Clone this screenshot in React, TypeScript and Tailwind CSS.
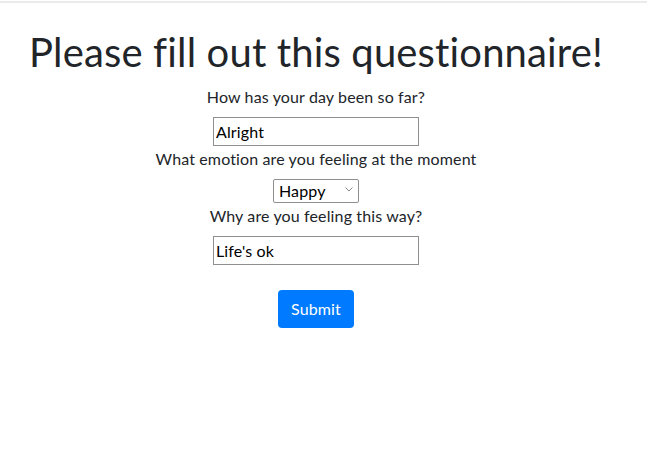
import { useState } from 'react'

export default function App() {
  const [day, setDay] = useState('Alright')
  const [emotion, setEmotion] = useState('Happy')
  const [why, setWhy] = useState("Life's ok")

  return (
    <div className="min-h-[467px] bg-white text-[#212529] font-['Segoe_UI',Lato,'Noto_Sans',sans-serif] [font-variant-ligatures:none]">
      {/* thin bar at the very top */}
      <div className="mt-px h-[2px] bg-[#ebebeb]" />

      <div className="w-[632px] flex flex-col items-center text-center">
        <h1 className="mt-[25px] text-[40px] leading-[48px] font-normal tracking-[0.15px]">
          Please fill out this questionnaire!
        </h1>

        <form className="flex flex-col items-center tracking-[0.13px]" onSubmit={(e) => e.preventDefault()}>
          <label className="mt-[9px] text-[16px] leading-[24px]">How has your day been so far?</label>
          <input
            value={day}
            onChange={(e) => setDay(e.target.value)}
            className="mt-[8px] w-[206px] h-[29px] border border-[#8f8f8f] px-[2px] text-[16px] text-black outline-none"
          />

          <label className="mt-px text-[16px] leading-[24px]">What emotion are you feeling at the moment</label>
          <div className="relative mt-[8px]">
            <select
              value={emotion}
              onChange={(e) => setEmotion(e.target.value)}
              className="appearance-none w-[86px] h-[24px] border border-[#8f8f8f] rounded-[2px] pl-[5px] text-[16px] leading-[22px] text-black bg-white outline-none"
            >
              <option>Happy</option>
              <option>Sad</option>
              <option>Angry</option>
              <option>Tired</option>
            </select>
            <svg
              className="pointer-events-none absolute right-[6px] top-[8px] w-[8px] h-[5px]"
              viewBox="0 0 8 5"
              fill="none"
              stroke="#8a8a8a"
              strokeWidth="1"
            >
              <path d="M0.5 0.5 L4 4 L7.5 0.5" />
            </svg>
          </div>

          <label className="mt-px text-[16px] leading-[24px]">Why are you feeling this way?</label>
          <input
            value={why}
            onChange={(e) => setWhy(e.target.value)}
            className="mt-[8px] w-[206px] h-[29px] border border-[#8f8f8f] px-[2px] text-[16px] text-black outline-none"
          />

          <button
            type="submit"
            className="mt-[25px] w-[76px] h-[38px] rounded-[4px] bg-[#007bff] text-white text-[16px] leading-[24px]"
          >
            Submit
          </button>
        </form>
      </div>
    </div>
  )
}
